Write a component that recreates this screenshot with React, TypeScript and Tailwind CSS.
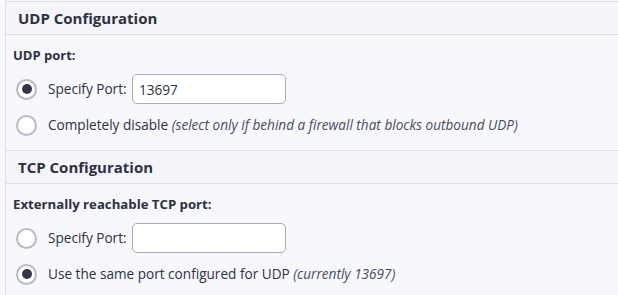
import { useState } from "react";

function SectionHeader({ title }: { title: string }) {
  return (
    <div className="h-[34px] border-y border-[#dfe0e6] bg-[#f4f5fa] pl-[12px] flex items-center">
      <span className="text-[15px] font-bold text-[#2e3041]">{title}</span>
    </div>
  );
}

function Radio({ checked, onClick }: { checked: boolean; onClick: () => void }) {
  return (
    <button
      type="button"
      onClick={onClick}
      className="ml-[3px] w-[21px] h-[21px] shrink-0 rounded-full border-2 border-[#b9bac3] bg-white flex items-center justify-center"
    >
      {checked && <span className="w-[10px] h-[10px] rounded-full bg-[#34364a]" />}
    </button>
  );
}

export default function App() {
  const [udp, setUdp] = useState<"port" | "off">("port");
  const [tcp, setTcp] = useState<"port" | "same">("same");
  const [udpPort, setUdpPort] = useState("13697");
  const [tcpPort, setTcpPort] = useState("");

  const input =
    "w-[154px] h-[30px] rounded-[5px] border border-[#a9aab3] bg-white px-[6px] text-[13.6px] text-[#2e3041] outline-none";

  return (
    <div className="w-[618px] h-[295px] overflow-hidden bg-[#f7f8fd] pl-[5px] font-['Open_Sans',sans-serif] text-[#2e3041]">
      <div className="h-full border-l border-[#e0e1e7] pt-px">
        {/* UDP */}
        <SectionHeader title="UDP Configuration" />
        <div className="pl-[7px] pt-[11px] pb-[14px]">
          <div className="h-[20px] flex items-center text-[13px] font-bold">UDP port:</div>
          <div className="mt-[8px] h-[30px] flex items-center">
            <Radio checked={udp === "port"} onClick={() => setUdp("port")} />
            <span className="ml-[11px] w-[84px] text-[13.6px]">Specify Port:</span>
            <input className={input} value={udpPort} onChange={(e) => setUdpPort(e.target.value)} />
          </div>
          <div className="mt-[10px] h-[22px] flex items-center">
            <Radio checked={udp === "off"} onClick={() => setUdp("off")} />
            <span className="ml-[11px] text-[13.6px]">
              Completely disable{" "}
              <i className="text-[#4a4c5e]">(select only if behind a firewall that blocks outbound UDP)</i>
            </span>
          </div>
        </div>

        {/* TCP */}
        <SectionHeader title="TCP Configuration" />
        <div className="pl-[7px] pt-[11px]">
          <div className="h-[20px] flex items-center text-[13.2px] font-bold">Externally reachable TCP port:</div>
          <div className="mt-[8px] h-[30px] flex items-center">
            <Radio checked={tcp === "port"} onClick={() => setTcp("port")} />
            <span className="ml-[11px] w-[84px] text-[13.6px]">Specify Port:</span>
            <input className={input} value={tcpPort} onChange={(e) => setTcpPort(e.target.value)} />
          </div>
          <div className="mt-[10px] h-[22px] flex items-center">
            <Radio checked={tcp === "same"} onClick={() => setTcp("same")} />
            <span className="ml-[11px] text-[13.6px]">
              Use the same port configured for UDP <i className="text-[#4a4c5e]">(currently 13697)</i>
            </span>
          </div>
        </div>
      </div>
    </div>
  );
}
